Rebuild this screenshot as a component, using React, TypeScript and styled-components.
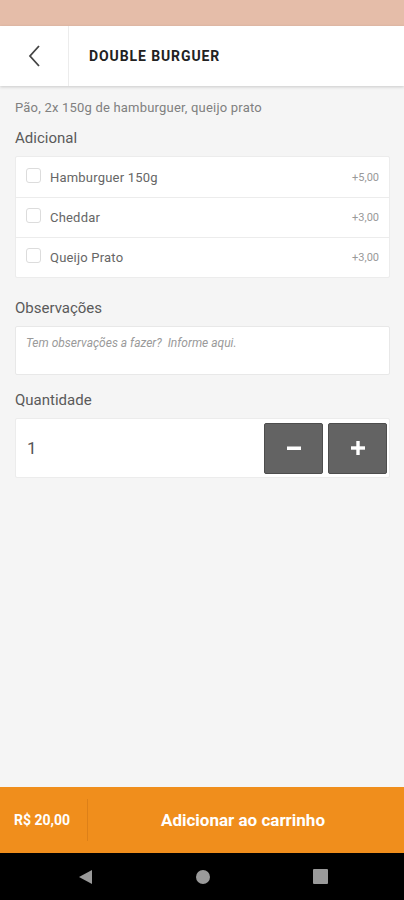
import styled, { createGlobalStyle } from "styled-components"

const GlobalStyle = createGlobalStyle`
    html, body {
        margin: 0;
        padding: 0;
        background: #f5f5f5;
    }
    * {
        box-sizing: border-box;
    }
`

const Screen = styled.div`
    width: 404px;
    height: 900px;
    display: flex;
    flex-direction: column;
    background: #f5f5f5;
    font-family: Roboto, "Liberation Sans", sans-serif;
    color: #555;
`

const StatusBar = styled.div`
    height: 26px;
    background: #e5bda9;
    flex-shrink: 0;
`

const Header = styled.header`
    height: 60px;
    display: flex;
    background: #fff;
    box-shadow: 0 1px 3px rgba(0, 0, 0, 0.18);
    flex-shrink: 0;
    position: relative;
    z-index: 1;
`

const BackButton = styled.div`
    width: 69px;
    display: flex;
    align-items: center;
    justify-content: center;
    border-right: 1px solid #ececec;
`

const Title = styled.h1`
    margin: 0;
    padding-left: 20px;
    display: flex;
    align-items: center;
    font-size: 14px;
    font-weight: 700;
    color: #222;
    letter-spacing: 0.9px;
`

const Content = styled.main`
    flex: 1;
    padding: 14px 15px 0 15px;
    display: flex;
    flex-direction: column;
`

const Description = styled.p`
    margin: 0;
    font-size: 13px;
    color: #808080;
    line-height: 16px;
    letter-spacing: 0.2px;
`

const SectionLabel = styled.h2<{ $top: number }>`
    margin: ${p => p.$top}px 0 8px 0;
    font-size: 15px;
    font-weight: 400;
    color: #5a5a5a;
    line-height: 20px;
`

const Card = styled.div`
    background: #fff;
    border: 1px solid #ececec;
    border-radius: 2px;
    width: 375px;
`

const OptionRow = styled.label`
    height: 40px;
    display: flex;
    align-items: center;
    padding: 0 10px 0 10px;
    & + & {
        border-top: 1px solid #ececec;
    }
`

const Check = styled.span`
    width: 15px;
    height: 15px;
    border: 1px solid #dcdcdc;
    border-radius: 3px;
    margin-right: 9px;
    margin-top: -4px;
`

const OptionName = styled.span`
    flex: 1;
    font-size: 13px;
    color: #666;
    letter-spacing: 0.2px;
`

const OptionPrice = styled.span`
    font-size: 11px;
    color: #999;
`

const Notes = styled.div`
    height: 49px;
    background: #fff;
    border: 1px solid #e8e8e8;
    border-radius: 2px;
    padding: 9px 10px;
    width: 375px;
    font-size: 12px;
    font-style: italic;
    color: #9a9a9a;
`

const QtyBox = styled.div`
    width: 375px;
    height: 60px;
    background: #fff;
    border: 1px solid #ececec;
    border-radius: 2px;
    display: flex;
    align-items: center;
    padding: 0 2px 0 11px;
    gap: 5px;
`

const QtyValue = styled.span`
    flex: 1;
    font-size: 17px;
    color: #555;
`

const QtyButton = styled.button`
    width: 59px;
    height: 51px;
    border: 1px solid #4d4d4d;
    border-radius: 2px;
    background: #636363;
    display: flex;
    align-items: center;
    justify-content: center;
    padding: 0;
`

const Footer = styled.footer`
    height: 66px;
    background: #f08e1c;
    display: flex;
    align-items: center;
    flex-shrink: 0;
    color: #fff;
`

const Total = styled.div`
    width: 88px;
    height: 42px;
    display: flex;
    align-items: center;
    padding-left: 14px;
    font-size: 14px;
    font-weight: 700;
    border-right: 1px solid #dd8018;
`

const AddButton = styled.div`
    flex: 1;
    text-align: center;
    font-size: 17px;
    font-weight: 700;
    padding-right: 6px;
`

const NavBar = styled.nav`
    height: 47px;
    background: #000;
    display: flex;
    align-items: center;
    justify-content: center;
    gap: 102px;
    flex-shrink: 0;
`

const options = [
    { name: 'Hamburguer 150g', price: '+5,00' },
    { name: 'Cheddar', price: '+3,00' },
    { name: 'Queijo Prato', price: '+3,00' },
]

function App() {
    return <Screen>
        <GlobalStyle />
        <StatusBar />
        <Header>
            <BackButton>
                <svg width="14" height="24" viewBox="0 0 14 24">
                    <path d="M12 2 L3 12 L12 22" fill="none" stroke="#444" strokeWidth="1.8" />
                </svg>
            </BackButton>
            <Title>DOUBLE BURGUER</Title>
        </Header>
        <Content>
            <Description>Pão, 2x 150g de hamburguer, queijo prato</Description>
            <SectionLabel $top={12}>Adicional</SectionLabel>
            <Card>
                {options.map((o) => {
                    return <OptionRow key={o.name}>
                        <Check />
                        <OptionName>{o.name}</OptionName>
                        <OptionPrice>{o.price}</OptionPrice>
                    </OptionRow>
                })}
            </Card>
            <SectionLabel $top={20}>Observações</SectionLabel>
            <Notes>Tem observações a fazer?&nbsp; Informe aqui.</Notes>
            <SectionLabel $top={15}>Quantidade</SectionLabel>
            <QtyBox>
                <QtyValue>1</QtyValue>
                <QtyButton>
                    <svg width="14" height="14" viewBox="0 0 14 14">
                        <rect x="0" y="5.5" width="14" height="3.5" fill="#fff" />
                    </svg>
                </QtyButton>
                <QtyButton>
                    <svg width="14" height="14" viewBox="0 0 14 14">
                        <rect x="0" y="5.3" width="14" height="3.4" fill="#fff" />
                        <rect x="5.3" y="0" width="3.4" height="14" fill="#fff" />
                    </svg>
                </QtyButton>
            </QtyBox>
        </Content>
        <Footer>
            <Total>R$ 20,00</Total>
            <AddButton>Adicionar ao carrinho</AddButton>
        </Footer>
        <NavBar>
            <svg width="16" height="16" viewBox="0 0 16 16">
                <path d="M15 1 L15 15 L2 8 Z" fill="#9a9a9a" />
            </svg>
            <svg width="16" height="16" viewBox="0 0 16 16">
                <circle cx="8" cy="8" r="7" fill="#9a9a9a" />
            </svg>
            <svg width="15" height="15" viewBox="0 0 15 15">
                <rect x="0" y="0" width="15" height="15" rx="1" fill="#9a9a9a" />
            </svg>
        </NavBar>
    </Screen>
}

export default App
